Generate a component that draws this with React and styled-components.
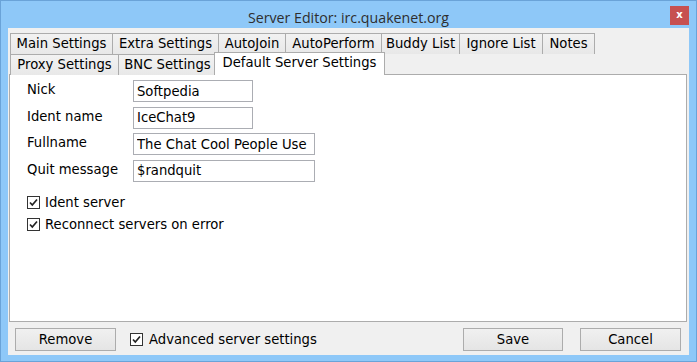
import React from "react";
import styled, { createGlobalStyle } from "styled-components";

const GlobalStyle = createGlobalStyle`
  body {
    margin: 0;
    font-family: "DejaVu Sans", Verdana, sans-serif;
  }
  * { box-sizing: border-box; }
`;

const frame = "#8ec8f8";
const line = "#acacac";
const fs = "13.2px";

const Window = styled.div`
  width: 697px;
  height: 362px;
  background: ${frame};
  border: 1px solid #6aa3d8;
  display: flex;
  flex-direction: column;
`;

const TitleBar = styled.div`
  height: 27px;
  display: grid;
  grid-template-columns: 1fr auto 1fr;
  align-items: start;
  padding: 5px 7px 0 7px;
`;

const Title = styled.div`
  grid-column: 2;
  font-family: "Open Sans", "Noto Sans", sans-serif;
  font-size: 14.2px;
  line-height: 18px;
  margin-top: 3px;
  color: #2e2e2e;
`;

const CloseButton = styled.div`
  grid-column: 3;
  justify-self: end;
  width: 19px;
  height: 19px;
  background: #c75050;
  color: #fff;
  font-family: "DejaVu Sans", sans-serif;
  font-weight: bold;
  font-size: 10px;
  line-height: 18px;
  text-align: center;
`;

const Client = styled.div`
  flex: 1;
  margin: 0 7px 6px 7px;
  background: #f0f0f0;
  display: flex;
  flex-direction: column;
`;

const TabArea = styled.div`
  flex: 1;
  display: flex;
  flex-direction: column;
  padding: 5px 2px 0 1px;
`;

const TabRow = styled.div`
  display: flex;
  align-items: flex-start;
  height: ${(p) => p.$h}px;
  padding-left: 1px;
`;

const Tab = styled.div`
  width: ${(p) => p.$w}px;
  height: ${(p) => (p.$active ? 23 : 21)}px;
  margin-top: ${(p) => (p.$active ? -2 : 0)}px;
  margin-left: ${(p) => (p.$active ? -2 : 0)}px;
  margin-right: -1px;
  position: ${(p) => (p.$active ? "relative" : "static")};
  z-index: ${(p) => (p.$active ? 1 : 0)};
  background: ${(p) => (p.$active ? "#fff" : "linear-gradient(#f2f2f2, #e8e8e8)")};
  border: 1px solid ${line};
  border-bottom: none;
  font-size: ${fs};
  line-height: 19px;
  color: #000;
  text-align: center;
  white-space: nowrap;
`;

const Panel = styled.div`
  flex: 1;
  background: #fff;
  border: 1px solid ${line};
  padding: 5px 0 0 17px;
`;

const Form = styled.div`
  display: grid;
  grid-template-columns: 106px auto;
  row-gap: 4.67px;
  justify-content: start;
`;

const Label = styled.div`
  font-size: ${fs};
  line-height: 16px;
  color: #000;
  padding-top: 2px;
`;

const Field = styled.input`
  width: ${(p) => (p.$wide ? 182 : 120)}px;
  height: 22px;
  border: 1px solid #abadb3;
  padding: 0 3px;
  font-family: "DejaVu Sans", sans-serif;
  font-size: ${fs};
  color: #000;
  outline: none;
`;

const CheckList = styled.div`
  margin-top: 10px;
  display: flex;
  flex-direction: column;
`;

const CheckRow = styled.label`
  height: 22px;
  display: flex;
  align-items: center;
  gap: 5px;
  font-size: ${fs};
  color: #000;
`;

const Box = styled.span`
  width: 13px;
  height: 13px;
  border: 1px solid #333;
  background: #fff;
  display: flex;
  align-items: center;
  justify-content: center;
  flex-shrink: 0;
`;

const BottomBar = styled.div`
  height: 33px;
  display: flex;
  align-items: flex-start;
  padding: 6px 8px 0 7px;
`;

const Button = styled.div`
  width: ${(p) => p.$w}px;
  height: 23px;
  margin-left: ${(p) => p.$ml || 0}px;
  border: 1px solid ${line};
  background: linear-gradient(#f0f0f0, #e5e5e5);
  font-size: ${fs};
  line-height: 22px;
  text-align: center;
  color: #000;
`;

const BottomCheck = styled(CheckRow)`
  margin-left: 14px;
  gap: 6px;
`;

const Spacer = styled.div`
  flex: 1;
`;

const Check = ({ children, as: Row = CheckRow }) => (
  <Row>
    <Box>
      <svg width="11" height="11" viewBox="0 0 11 11">
        <path d="M2 5.5 L4.3 8 L9 2.5" fill="none" stroke="#222" strokeWidth="1.7" />
      </svg>
    </Box>
    {children}
  </Row>
);

const row1 = [
  ["Main Settings", 103],
  ["Extra Settings", 107],
  ["AutoJoin", 68],
  ["AutoPerform", 97],
  ["Buddy List", 79],
  ["Ignore List", 84],
  ["Notes", 53],
];

const row2 = [
  ["Proxy Settings", 109],
  ["BNC Settings", 99],
];

const fields = [
  ["Nick", "Softpedia", false],
  ["Ident name", "IceChat9", false],
  ["Fullname", "The Chat Cool People Use", true],
  ["Quit message", "$randquit", true],
];

export default function App() {
  return (
    <>
      <GlobalStyle />
      <Window>
        <TitleBar>
          <Title>Server Editor: irc.quakenet.org</Title>
          <CloseButton>x</CloseButton>
        </TitleBar>
        <Client>
          <TabArea>
            <TabRow $h={21}>
              {row1.map(([t, w]) => (
                <Tab key={t} $w={w}>{t}</Tab>
              ))}
            </TabRow>
            <TabRow $h={20}>
              {row2.map(([t, w]) => (
                <Tab key={t} $w={w}>{t}</Tab>
              ))}
              <Tab $w={171} $active>Default Server Settings</Tab>
            </TabRow>
            <Panel>
              <Form>
                {fields.map(([l, v, wide]) => (
                  <React.Fragment key={l}>
                    <Label>{l}</Label>
                    <Field defaultValue={v} $wide={wide} />
                  </React.Fragment>
                ))}
              </Form>
              <CheckList>
                <Check>Ident server</Check>
                <Check>Reconnect servers on error</Check>
              </CheckList>
            </Panel>
          </TabArea>
          <BottomBar>
            <Button $w={101}>Remove</Button>
            <Check as={BottomCheck}>Advanced server settings</Check>
            <Spacer />
            <Button $w={100}>Save</Button>
            <Button $w={101} $ml={17}>Cancel</Button>
          </BottomBar>
        </Client>
      </Window>
    </>
  );
}
